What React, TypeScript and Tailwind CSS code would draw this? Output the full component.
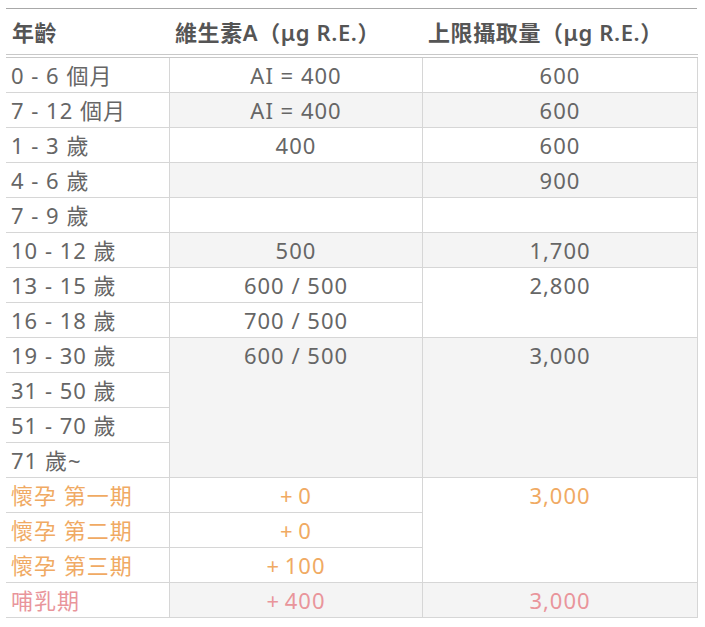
import React from "react";

const grey = "bg-[#f4f4f4]";

type Cell = { text?: string; span?: number; bg?: boolean; tone?: "orange" | "pink" };
type Row = { age: string; tone?: "orange" | "pink"; a?: Cell; b?: Cell };

const rows: Row[] = [
  { age: "0 - 6 個月", a: { text: "AI = 400" }, b: { text: "600" } },
  { age: "7 - 12 個月", a: { text: "AI = 400", bg: true }, b: { text: "600", bg: true } },
  { age: "1 - 3 歲", a: { text: "400" }, b: { text: "600" } },
  { age: "4 - 6 歲", a: { bg: true }, b: { text: "900", bg: true } },
  { age: "7 - 9 歲", a: {}, b: {} },
  { age: "10 - 12 歲", a: { text: "500", bg: true }, b: { text: "1,700", bg: true } },
  { age: "13 - 15 歲", a: { text: "600 / 500" }, b: { text: "2,800", span: 2 } },
  { age: "16 - 18 歲", a: { text: "700 / 500" } },
  { age: "19 - 30 歲", a: { text: "600 / 500", span: 4, bg: true }, b: { text: "3,000", span: 4, bg: true } },
  { age: "31 - 50 歲" },
  { age: "51 - 70 歲" },
  { age: "71 歲~" },
  { age: "懷孕 第一期", tone: "orange", a: { text: "+\u20090", tone: "orange" }, b: { text: "3,000", span: 3, tone: "orange" } },
  { age: "懷孕 第二期", tone: "orange", a: { text: "+\u20090", tone: "orange" } },
  { age: "懷孕 第三期", tone: "orange", a: { text: "+\u2009100", tone: "orange" } },
  { age: "哺乳期", tone: "pink", a: { text: "+\u2009400", bg: true, tone: "pink" }, b: { text: "3,000", bg: true, tone: "pink" } },
];

function toneClass(tone?: "orange" | "pink") {
  if (tone === "orange") return "text-[#f0aa63]";
  if (tone === "pink") return "text-[#e9959b]";
  return "text-[#666]";
}

function ValueCell({ cell }: { cell: Cell }) {
  return (
    <td
      rowSpan={cell.span}
      className={[
        "h-[35px] border border-[#d6d6d6] p-0 pl-[1px] text-center align-top leading-[34px]",
        cell.bg ? grey : "bg-white",
        toneClass(cell.tone),
      ].join(" ")}
    >
      {cell.text}
    </td>
  );
}

export default function App() {
  return (
    <main className="min-h-screen bg-white pt-2 pl-[6px] font-['Noto_Sans','Noto_Sans_CJK_TC',sans-serif] text-[22px] tracking-[1px]">
      <table className="w-[691px] table-fixed border-collapse">
        <colgroup>
          <col className="w-[163px]" />
          <col className="w-[253px]" />
          <col className="w-[275px]" />
        </colgroup>
        <thead>
          <tr className="border-t border-b-4 border-t-[#a8a8a8] border-b-[#c8c8c8] border-double">
            <th className="h-[47px] pl-[6px] pt-[2px] text-left font-semibold tracking-[0.6px] text-[#555]">年齡</th>
            <th className="h-[47px] pl-[6px] pt-[2px] text-left font-semibold tracking-[0.6px] text-[#555]">維生素A（μg R.E.）</th>
            <th className="h-[47px] pl-[6px] pt-[2px] text-left font-semibold tracking-[0.6px] text-[#555]">上限攝取量（μg R.E.）</th>
          </tr>
        </thead>
        <tbody>
          {rows.map((row) => (
            <tr key={row.age}>
              <td
                className={[
                  "h-[35px] border-y border-r border-[#d6d6d6] bg-white p-0 pl-[5px] text-left align-top leading-[34px]",
                  toneClass(row.tone),
                ].join(" ")}
              >
                {row.age}
              </td>
              {row.a && <ValueCell cell={row.a} />}
              {row.b && <ValueCell cell={row.b} />}
            </tr>
          ))}
        </tbody>
      </table>
    </main>
  );
}
